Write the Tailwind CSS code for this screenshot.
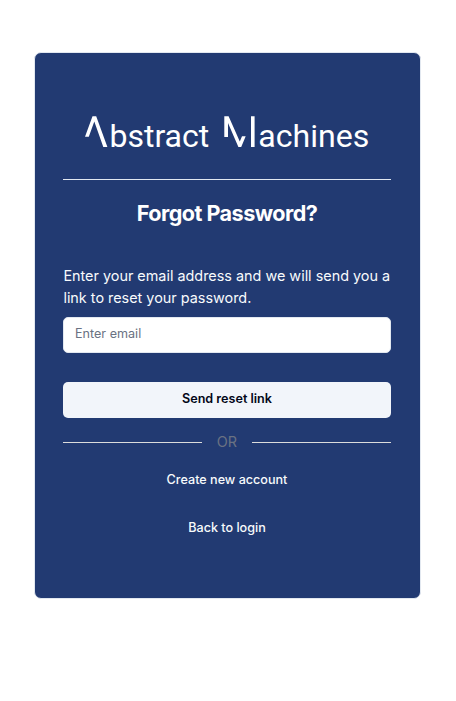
<!DOCTYPE html>
<html lang="en">
<head>
<meta charset="utf-8">
<title>Forgot Password</title>
<script src="https://cdn.jsdelivr.net/npm/@tailwindcss/browser@4"></script>
</head>
<body class="bg-white font-['Inter',sans-serif]">
<main class="ml-[34px] pt-[52px] w-[387px]">
  <section class="h-[547px] w-[387px] rounded-[7px] border border-slate-200 bg-[#223a72] pr-[29px] pl-7 text-slate-50">
    <svg class="mt-[57px] block h-[50px] w-[328px]" viewBox="63 110 328 50" fill="#fff" role="img" aria-label="Abstract Machines">
      <path d="M85 136.7 92.5 116.3H96.2L107.4 147H103.3L94.3 121.5 88.8 136.7Z"/>
      <text x="109.4" y="147" font-family="Roboto, sans-serif" font-size="31.8" textLength="99.9" lengthAdjust="spacingAndGlyphs">bstract</text>
      <path d="M224.3 116.3H228.6L239.8 141.6 242 136.2H245.7L241.2 147H238.4L228 123V137H224.3ZM251 116.3H254.6V147H251Z"/>
      <text x="258.3" y="147" font-family="Roboto, sans-serif" font-size="31.8" textLength="111.1" lengthAdjust="spacingAndGlyphs">achines</text>
    </svg>
    <div class="mt-[19px] h-px bg-slate-200"></div>
    <h1 class="mt-[19px] text-center text-[21.6px] leading-[28px] font-bold tracking-[-0.54px] text-white">Forgot Password?</h1>
    <form>
      <label class="mt-[38px] ml-[0.4px] block text-[14.4px] leading-[22px] whitespace-nowrap" for="email">Enter your email address and we will send you a<br>link to reset your password.</label>
      <input id="email" type="email" placeholder="Enter email" class="mt-2 block h-9 w-full rounded-[5px] border border-slate-200 bg-white px-[11px] pb-[3px] text-[12.6px] text-slate-900 placeholder:text-gray-500">
      <button type="button" class="mt-[29px] block h-9 w-full rounded-[5px] bg-[#f2f5fa] pb-[2px] text-[12.6px] font-semibold text-slate-950">Send reset link</button>
    </form>
    <div class="mt-[14px] flex h-5 items-center">
      <div class="h-px flex-1 bg-[#dcdcdc]"></div>
      <span class="w-[50px] text-center text-[14.4px] leading-5 text-gray-500">OR</span>
      <div class="h-px flex-1 bg-[#dcdcdc]"></div>
    </div>
    <nav class="mt-[18px] flex flex-col items-center gap-7 text-[12.6px] leading-5 font-medium">
      <a href="#">Create new account</a>
      <a href="#">Back to login</a>
    </nav>
  </section>
</main>
</body>
</html>
